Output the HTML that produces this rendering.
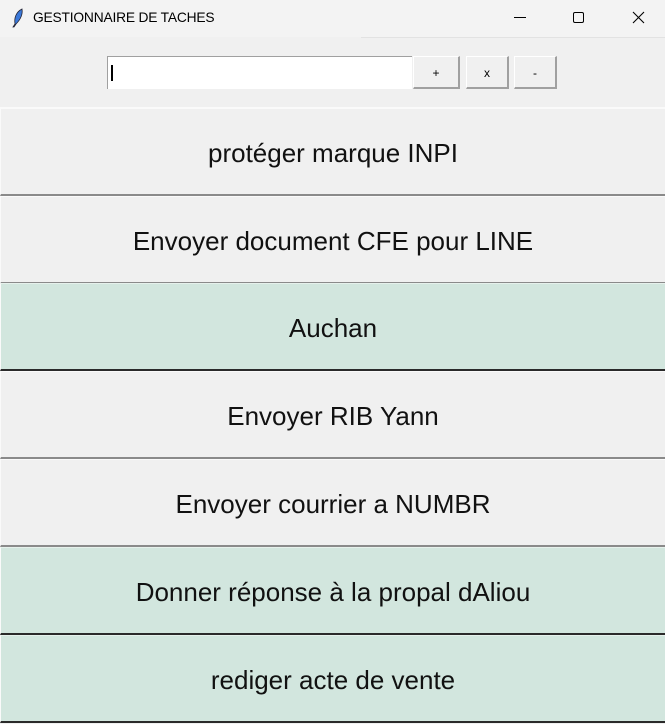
<!DOCTYPE html>
<html><head><meta charset="utf-8"><style>
*{margin:0;padding:0;box-sizing:border-box}
body{width:665px;height:721px;overflow:hidden;background:#f0f0f0;font-family:"Liberation Sans",sans-serif;position:relative}
.title{position:absolute;left:0;top:0;width:665px;height:37px;background:#f3f3f3}
.title .t{position:absolute;left:33px;top:10px;font-size:13.8px;color:#000;letter-spacing:-0.2px}
.sep{position:absolute;left:361px;top:37px;width:304px;height:1px;background:#e2e2e2}
.entry{position:absolute;left:107px;top:56px;width:305px;height:33px;background:#fff;border-top:1px solid #a0a0a0;border-left:1px solid #a0a0a0}
.cur{position:absolute;left:3px;top:8px;width:2px;height:16px;background:#000}
.b{position:absolute;top:56px;height:33px;background:#f0f0f0;border-top:1px solid #fff;border-left:1px solid #fff;border-right:2px solid #a0a0a0;border-bottom:2px solid #a0a0a0;font-size:12px;text-align:center;line-height:32px}
.row{position:absolute;left:0;width:665px;height:88px;border-top:1px solid #fafafa;border-left:1px solid #fafafa;border-bottom:2px solid #8a8a8a;font-size:26px;color:#111;text-align:center;line-height:88px}
.g{background:#d2e6de;border-bottom-color:#2a2a2a;border-top-color:#e6f1ec}
.w{background:#f0f0f0}
</style></head><body>
<div class="title">
<svg style="position:absolute;left:11px;top:8px" width="14" height="20" viewBox="0 0 14 20"><path d="M11 1 C5 4 3 10 4 16 L2 19 L3 19 L5 16 C9 12 12 7 11 1Z" fill="#3a78d8" stroke="#223" stroke-width="0.8"/></svg>
<div class="t">GESTIONNAIRE DE TACHES</div>
<svg style="position:absolute;left:514px;top:17px" width="12" height="2"><rect width="12" height="1" fill="#000"/></svg>
<svg style="position:absolute;left:573px;top:12px" width="12" height="12"><rect x="0.5" y="0.5" width="10" height="10" rx="1.5" fill="none" stroke="#000"/></svg>
<svg style="position:absolute;left:632px;top:11px" width="13" height="13"><path d="M1 1 L12 12 M12 1 L1 12" stroke="#000" stroke-width="1.1"/></svg>
</div>
<div class="sep"></div>
<div class="entry"><div class="cur"></div></div>
<div class="b" style="left:413px;width:47px">+</div>
<div class="b" style="left:466px;width:43px">x</div>
<div class="b" style="left:514px;width:43px">-</div>
<div style="position:absolute;left:0;top:107px;width:665px;height:1px;background:#fafafa"></div>
<div class="row w" style="top:108px">protéger marque INPI</div>
<div class="row w" style="top:196px">Envoyer document CFE pour LINE</div>
<div class="row g" style="top:283px">Auchan</div>
<div class="row w" style="top:371px">Envoyer RIB Yann</div>
<div class="row w" style="top:459px">Envoyer courrier a NUMBR</div>
<div class="row g" style="top:547px">Donner réponse à la propal dAliou</div>
<div class="row g" style="top:635px">rediger acte de vente</div>
</body></html>
